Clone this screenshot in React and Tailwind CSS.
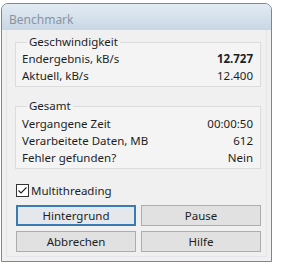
import React from 'react';

const Row = ({ label, value, bold }) => (
  <div className="flex justify-between items-center h-[17px]">
    <span>{label}</span>
    <span className={bold ? 'font-bold' : ''}>{value}</span>
  </div>
);

const Group = ({ title, children, className }) => (
  <fieldset className={`border border-[#dcdcdc] bg-[#f4f4f4] pl-[6px] pr-[7px] ${className}`}>
    <legend className="ml-[5px] px-[2px] leading-[16px]">{title}</legend>
    {children}
  </fieldset>
);

const Button = ({ children, primary }) => (
  <button
    className={`h-[21px] flex items-center justify-center ${
      primary
        ? 'border-2 border-[#3a7bb3] bg-[#e4e8ec]'
        : 'border border-[#adadad] bg-[#e1e1e1]'
    }`}
  >
    {children}
  </button>
);

export default function App() {
  return (
    <div
      className="w-[281px] h-[268px] bg-white pt-[3px] pl-[1px] text-[11.5px] text-[#1e1e1e]"
      style={{ fontFamily: '"Segoe UI", "Noto Sans", sans-serif' }}
    >
      <div className="w-[271px] h-[259px] border border-[#7a8797] rounded-t-[7px] flex flex-col bg-[#f0f0f0] overflow-hidden">
        {/* Title bar */}
        <div className="h-[26px] shrink-0 bg-gradient-to-b from-[#e3ebf3] to-[#c9d7e5] flex items-center pl-[7px] pt-[5px] text-[#8795a3] text-[12px]">
          Benchmark
        </div>

        {/* Client area */}
        <div className="flex-1 mx-[4px] mb-[4px] border border-[#e2e6ea] border-t-0 pl-[8px] pr-[5px] pt-[4px]">
          <Group title="Geschwindigkeit" className="pt-0 pb-[2px]">
            <Row label="Endergebnis, kB/s" value="12.727" bold />
            <Row label="Aktuell, kB/s" value="12.400" />
          </Group>

          <Group title="Gesamt" className="mt-[11px] pt-[1px] pb-[2px]">
            <Row label="Vergangene Zeit" value="00:00:50" />
            <Row label="Verarbeitete Daten, MB" value="612" />
            <Row label="Fehler gefunden?" value="Nein" />
          </Group>

          <div className="flex items-center h-[17px] mt-[13px] ml-[1px]">
            <svg width="13" height="13" viewBox="0 0 13 13" className="shrink-0">
              <rect x="0.5" y="0.5" width="12" height="12" fill="#fff" stroke="#333" />
              <path d="M2.5 6.5 L5 9 L10.5 3.5" fill="none" stroke="#222" strokeWidth="1.1" />
            </svg>
            <span className="ml-[2px]">Multithreading</span>
          </div>

          <div className="grid grid-cols-2 gap-x-[5px] gap-y-[5px] mt-[6px] ml-[1px]">
            <Button primary>Hintergrund</Button>
            <Button>Pause</Button>
            <Button>Abbrechen</Button>
            <Button>Hilfe</Button>
          </div>
        </div>
      </div>
    </div>
  );
}
